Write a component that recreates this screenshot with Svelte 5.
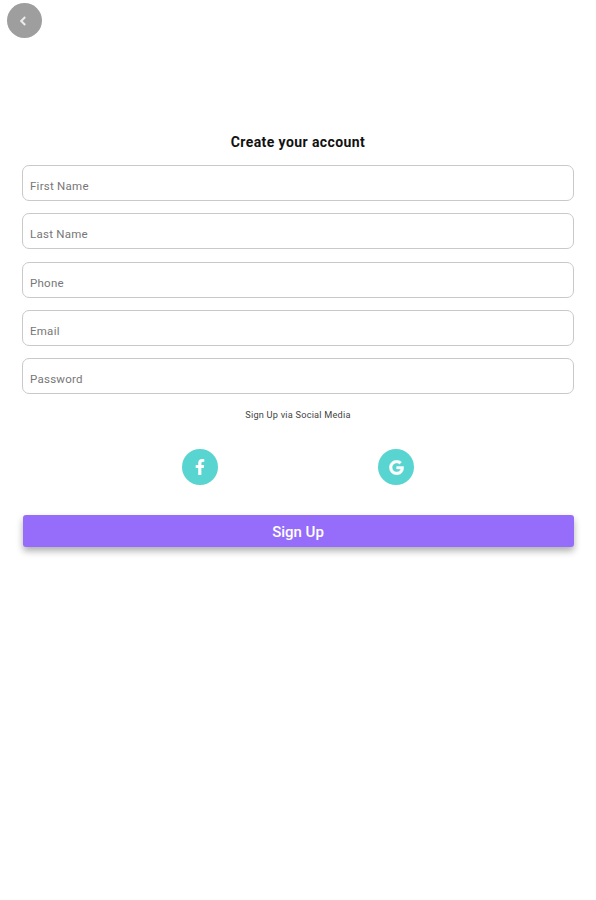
<script>
  const fields = ['First Name', 'Last Name', 'Phone', 'Email', 'Password'];
</script>

<main class="screen">
  <button class="back" aria-label="Back">
    <svg width="8" height="10" viewBox="0 0 8 10"><path d="M6.2 1 2.2 5 6.2 9" fill="none" stroke="#ececec" stroke-width="2" /></svg>
  </button>

  <form class="form">
    <h1>Create your account</h1>
    <div class="fields">
      {#each fields as field}
        <div class="field"><span>{field}</span></div>
      {/each}
    </div>
    <p>Sign Up via Social Media</p>
    <div class="social">
      <button type="button" class="round" aria-label="Facebook">
        <svg width="10" height="16" viewBox="0 0 320 512"><path fill="#fff" d="M279 288l14-93h-89v-60c0-25 12-50 52-50h41V6s-37-6-72-6c-74 0-122 44-122 125v70H22v93h81v224h101V288z" /></svg>
      </button>
      <button type="button" class="round" aria-label="Google">
        <svg width="15" height="15" viewBox="0 0 488 512"><path fill="#fff" stroke="#fff" stroke-width="14" d="M488 262C488 403 391 504 248 504 111 504 0 393 0 256S111 8 248 8c67 0 123 25 166 65l-67 65C259 53 94 117 94 256c0 87 69 157 154 157 98 0 135-70 141-107H248v-85h236c2 13 4 25 4 41z" /></svg>
      </button>
    </div>
    <button type="button" class="submit">Sign Up</button>
  </form>
</main>

<style>
  :global(body) {
    margin: 0;
    background: #fff;
  }
  .screen {
    box-sizing: border-box;
    min-height: 900px;
    padding: 3px 22px 0;
    font-family: Roboto, 'Liberation Sans', sans-serif;
  }
  button {
    display: flex;
    align-items: center;
    justify-content: center;
    border: 0;
    padding: 0;
    font-family: inherit;
  }
  .back {
    width: 35px;
    height: 35px;
    margin-left: -15px;
    border-radius: 50%;
    background: #9e9e9e;
  }
  .back svg {
    margin-right: 4px;
  }
  .form {
    margin-top: 94px;
    display: flex;
    flex-direction: column;
  }
  h1 {
    margin: 0;
    text-align: center;
    font-size: 14px;
    line-height: 20px;
    font-weight: 700;
    letter-spacing: 0.41px;
    color: #111;
  }
  .fields {
    display: flex;
    flex-direction: column;
    gap: 12.25px;
    margin-top: 13px;
  }
  .field {
    box-sizing: border-box;
    height: 36px;
    padding: 12px 7px 0;
    border: 1px solid #c9c9c9;
    border-radius: 7px;
    font-size: 11.5px;
    line-height: 16px;
    letter-spacing: 0.25px;
    color: #777;
  }
  p {
    margin: 14px 0 0;
    text-align: center;
    font-size: 9.2px;
    line-height: 14px;
    letter-spacing: 0.22px;
    color: #444;
  }
  .social {
    display: flex;
    justify-content: space-around;
    padding: 0 80px;
    margin-top: 27px;
  }
  .round {
    width: 36px;
    height: 36px;
    border-radius: 50%;
    background: #58d5d1;
  }
  .submit {
    box-sizing: border-box;
    height: 32px;
    margin: 30px 0 0 1px;
    padding: 1px 1px 0 0;
    border-radius: 3px;
    background: #966dfb;
    color: #fff;
    font-size: 15px;
    font-weight: 500;
    box-shadow: 0 4px 7px rgba(0, 0, 0, 0.32);
  }
</style>
